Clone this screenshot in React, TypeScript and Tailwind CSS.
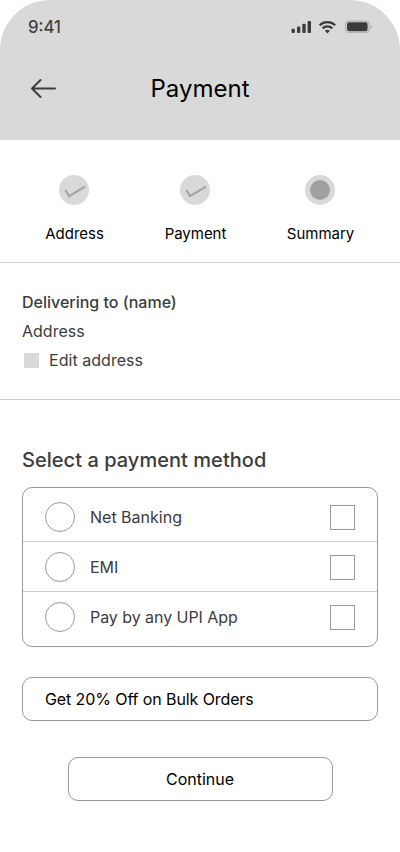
import React from "react";

const steps = [
  { label: "Address", done: true, place: "ml-[34px] w-20" },
  { label: "Payment", done: true, place: "ml-[41px] w-20" },
  { label: "Summary", done: false, place: "ml-[45px] w-20" },
];

const methods = [
  { label: "Net Banking", row: "h-[54px] border-b pt-[4px]", text: "" },
  { label: "EMI", row: "h-[50px] border-b", text: "" },
  { label: "Pay by any UPI App", row: "h-[50px]", text: "tracking-[-0.05px]" },
];

function StatusIcons() {
  return (
    <svg width="82" height="14" viewBox="0 0 82 14" fill="none" aria-hidden="true">
      <g fill="#3b3b3b">
        <rect x="0.5" y="8.7" width="3.4" height="4.3" rx="1" />
        <rect x="6" y="6.4" width="3.3" height="6.6" rx="1" />
        <rect x="11.3" y="3.7" width="3.4" height="9.3" rx="1" />
        <rect x="16.6" y="1" width="3.4" height="12" rx="1" />
      </g>
      <g stroke="#3b3b3b" strokeWidth="2.2">
        <path d="M28.6 5.3a11.2 11.2 0 0 1 15.6 0" />
        <path d="M31.5 8.4a7.1 7.1 0 0 1 9.8 0" />
      </g>
      <path d="M33.9 10.7q2.5-1.8 5 0L36.4 13.4z" fill="#3b3b3b" />
      <rect x="54.6" y="1.1" width="23.4" height="11.4" rx="3.4" stroke="#b3b3b3" strokeWidth="1.2" />
      <rect x="56" y="2.3" width="20.6" height="9" rx="2.2" fill="#3b3b3b" />
      <path d="M79.6 5v4q1.4-.6 1.4-2t-1.4-2z" fill="#aeaeae" />
    </svg>
  );
}

export default function App() {
  return (
    <main className="h-[852px] w-[400px] overflow-hidden bg-white font-['Inter',sans-serif] text-[#3c3c3c]">
      <header className="h-[140px] rounded-t-[50px] bg-[#d9d9d9]">
        <div className="flex h-[54px] items-center justify-between pr-[27px] pl-[28px]">
          <span className="text-[17px] leading-[22px] [-webkit-text-stroke:0.2px_#3c3c3c]">9:41</span>
          <StatusIcons />
        </div>
        <div className="grid h-[68px] grid-cols-[56px_1fr_56px] items-center">
          <button className="pl-[30px]" aria-label="Back">
            <svg width="26" height="22" viewBox="0 0 26 22" fill="none" stroke="#3c3c3c" strokeWidth="2" strokeLinecap="round" strokeLinejoin="round">
              <path d="M25 11.5H2M10.5 3 2 11.5l8.5 8.5" />
            </svg>
          </button>
          <h1 className="mt-[2px] text-center text-2xl text-black">Payment</h1>
        </div>
      </header>

      <section className="flex h-[123px] border-b border-[#cecece] pt-[35px]">
        {steps.map((step) => (
          <div key={step.label} className={`flex flex-col items-center ${step.place}`}>
            <span className="flex size-[30px] items-center justify-center rounded-full bg-[#d9d9d9]">
              {step.done ? (
                <svg width="30" height="30" viewBox="0 0 30 30" fill="none" stroke="#a2a2a2" strokeWidth="2">
                  <path d="m6.4 15 3.7 6.1L26 11.7" />
                </svg>
              ) : (
                <span className="size-5 rounded-full bg-[#9fa0a1]" />
              )}
            </span>
            <span className="mt-[18px] ml-px text-[15px] leading-[22px] tracking-[-0.02px] text-black">{step.label}</span>
          </div>
        ))}
      </section>

      <section className="h-[137px] border-b border-[#cecece] px-[22px] pt-[25px] text-base leading-[29px]">
        <h2 className="font-medium">Delivering to (name)</h2>
        <p>Address</p>
        <div className="flex items-center">
          <span className="mr-[10px] ml-[2px] size-[15px] bg-[#d9d9d9]" />
          <span className="tracking-[0.04px]">Edit address</span>
        </div>
      </section>

      <section className="flex flex-col px-[22px] pt-[46px]">
        <h2 className="text-xl leading-[28px] font-medium tracking-[0.04px]">Select a payment method</h2>
        <div className="mt-[13px] h-[160px] rounded-[10px] border border-[#999999]">
          {methods.map((method) => (
            <div key={method.label} className={`flex items-center border-[#cecece] px-[22px] ${method.row}`}>
              <span className="size-[30px] rounded-full border border-[#999999]" />
              <span className={`ml-[15px] flex-1 text-base ${method.text}`}>{method.label}</span>
              <span className="mt-px size-[25px] border border-[#999999]" />
            </div>
          ))}
        </div>
        <button className="mt-[30px] h-[44px] rounded-[10px] border border-[#999999] px-[22px] text-left text-base tracking-[-0.1px] text-black">
          Get 20% Off on Bulk Orders
        </button>
        <button className="mt-[36px] ml-[46px] h-[44px] w-[265px] rounded-[10px] border border-[#999999] pr-px text-base text-black">
          Continue
        </button>
      </section>
    </main>
  );
}
